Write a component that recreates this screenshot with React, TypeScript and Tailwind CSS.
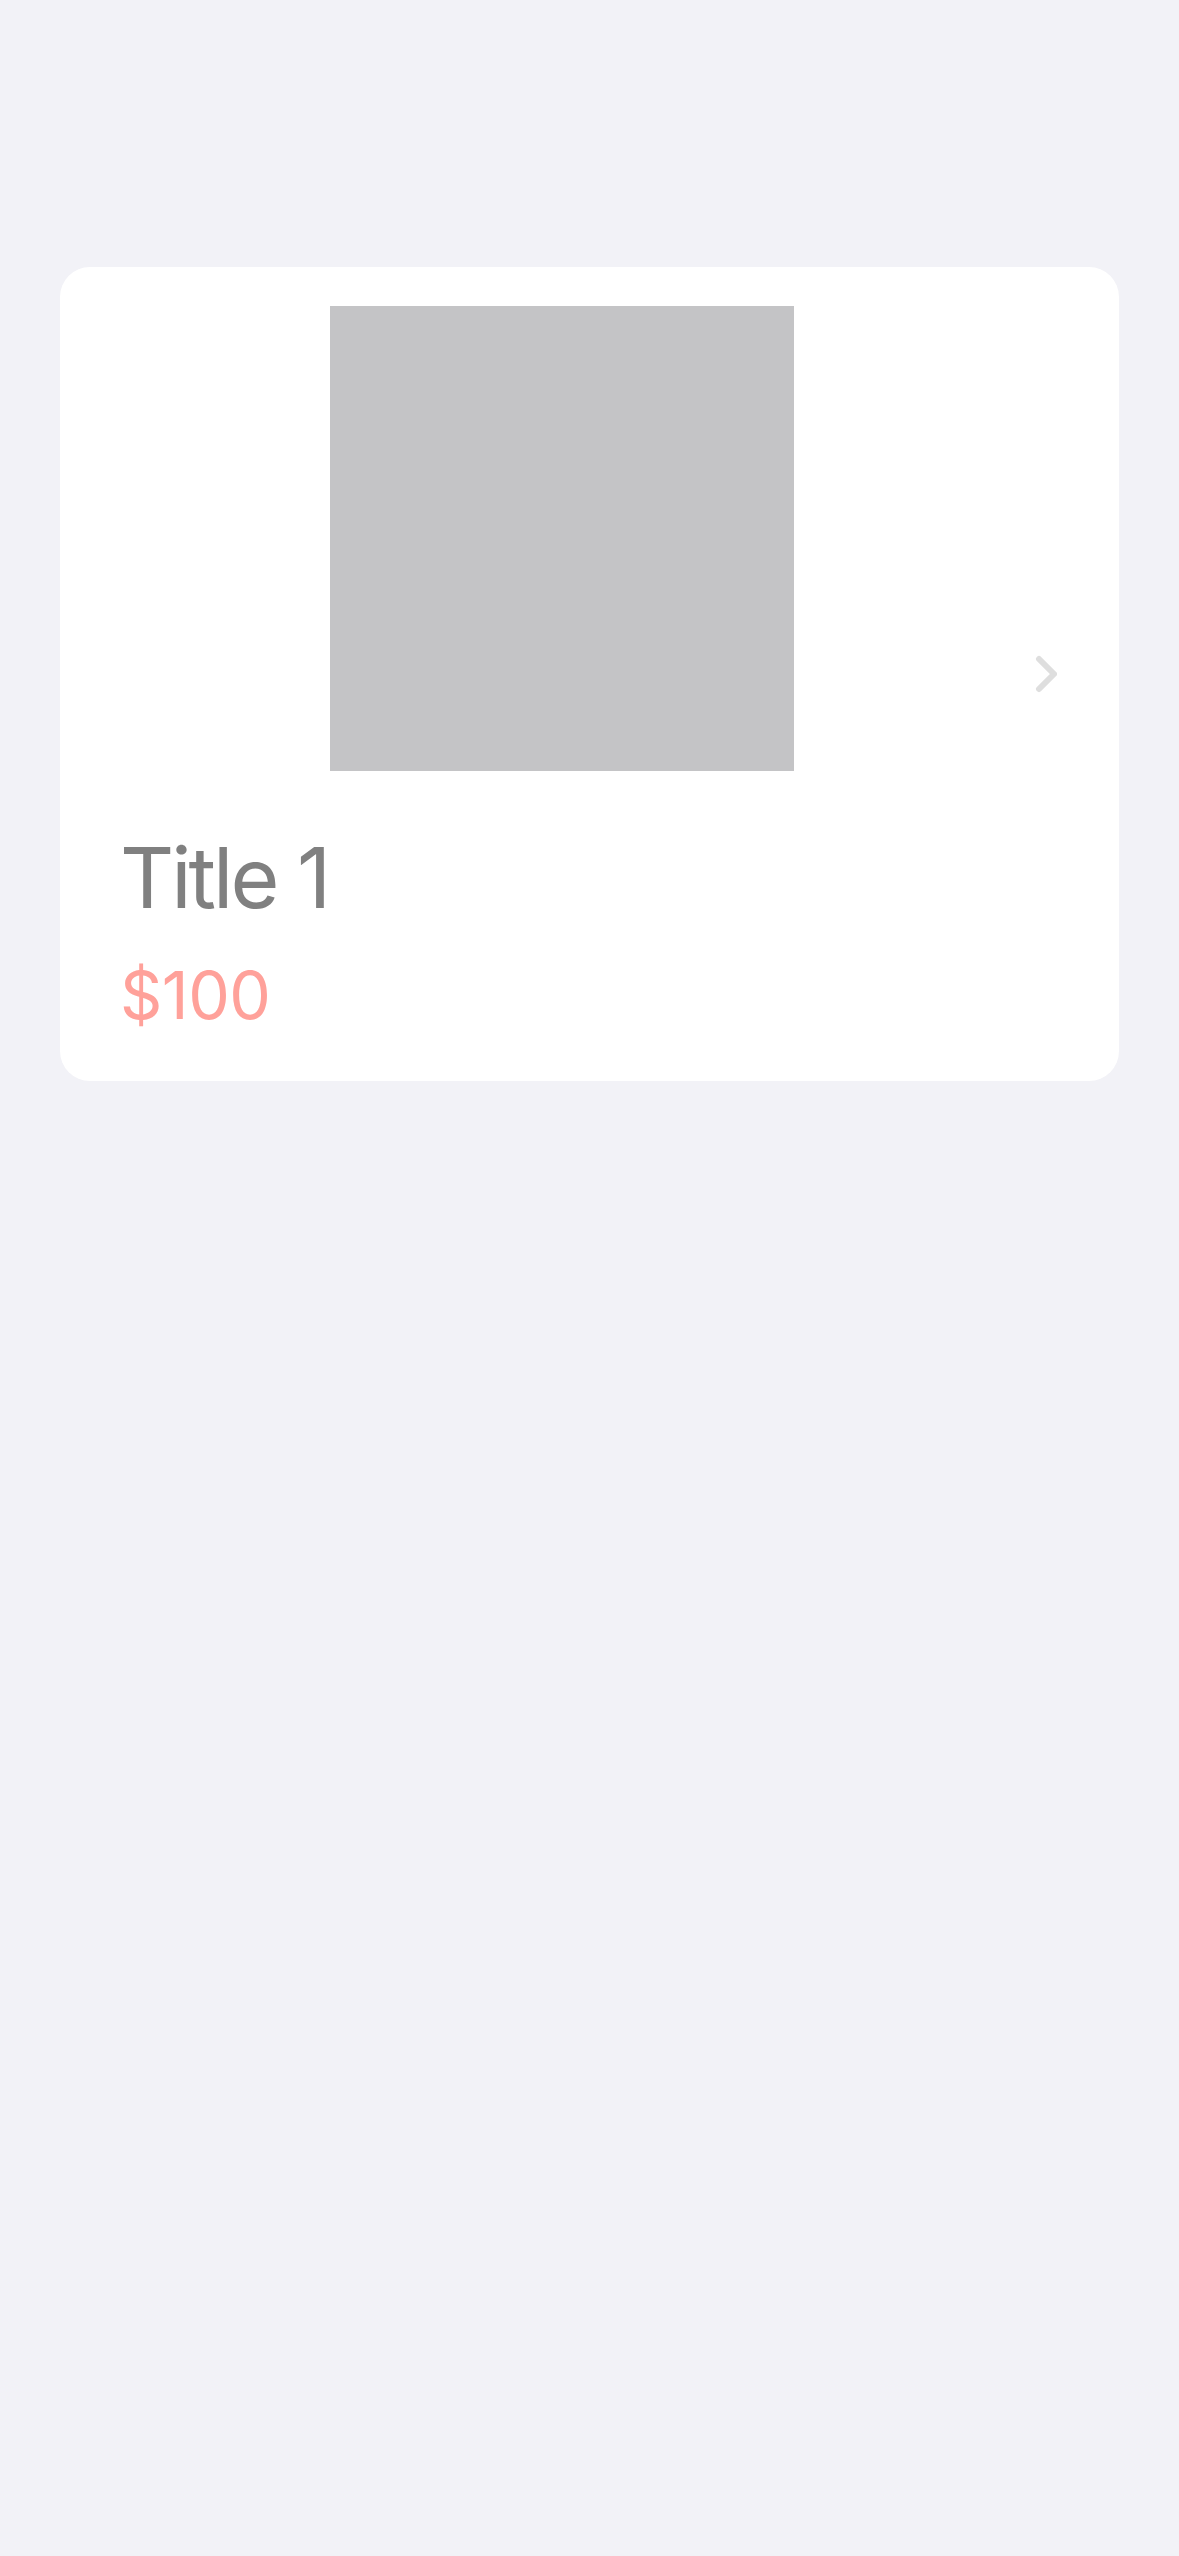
export default function App() {
  return (
    <div
      className="min-h-[2556px] w-full bg-[#f2f2f7] px-[60px] pt-[267px]"
      style={{ fontFamily: "Inter, 'Liberation Sans', sans-serif" }}
    >
      <div className="flex items-center rounded-[30px] bg-white pl-[60px] pr-[62px]">
        <div className="flex w-[884px] flex-col pt-[39px] pb-[53px]">
          <div className="mx-auto h-[465px] w-[464px] bg-[#c4c4c6]" />
          <div className="mt-[65px] text-[84px] leading-[84px] tracking-[-3px] text-[#808080]">Title 1</div>
          <div className="mt-[42px] text-[66px] leading-[66px] tracking-[-0.5px] text-[#ffa19a]">$100</div>
        </div>
        <svg
          className="ml-auto"
          width="24"
          height="40"
          viewBox="0 0 24 40"
          fill="none"
        >
          <polyline
            points="6,5 21,20 6,35"
            stroke="#dedede"
            strokeWidth="6"
            strokeLinecap="round"
            strokeLinejoin="round"
          />
        </svg>
      </div>
    </div>
  );
}
